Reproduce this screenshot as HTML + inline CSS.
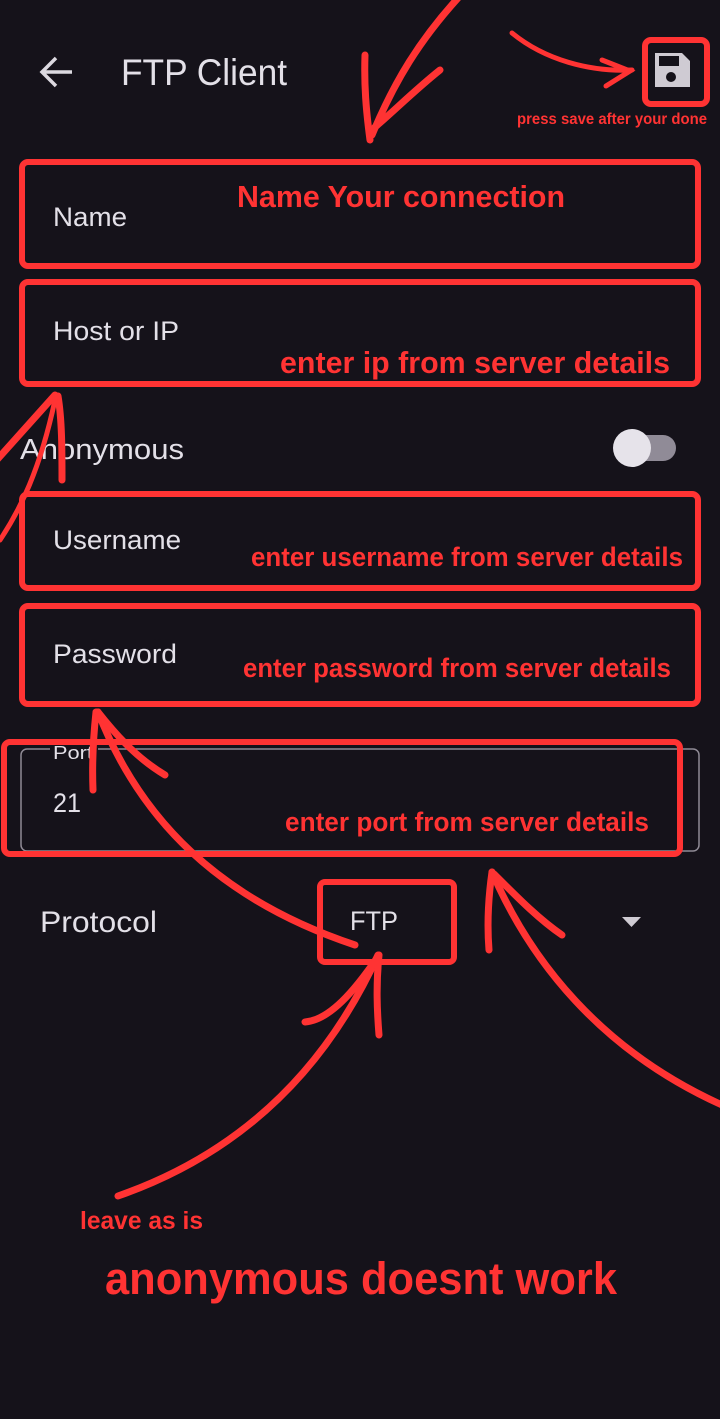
<!DOCTYPE html>
<html><head><meta charset="utf-8"><style>
html,body{margin:0;padding:0;background:#15121a;}
svg{display:block}
.ui{font-family:"Liberation Sans",sans-serif;fill:#e3e0e8}
.r{font-family:"Liberation Sans Narrow","Liberation Sans",sans-serif;font-weight:bold;fill:#ff3333}
</style></head><body>
<svg width="720" height="1419" viewBox="0 0 720 1419" xmlns="http://www.w3.org/2000/svg">
<rect width="720" height="1419" fill="#15121a"/>
<!-- app bar -->
<path d="M72 72H42M56 58L42 72L56 86" stroke="#dcd9e0" stroke-width="3.5" fill="none"/>
<text x="121" y="85" class="ui" font-size="37" textLength="166" lengthAdjust="spacingAndGlyphs">FTP Client</text>
<path d="M655 53h27l8 8v26h-35z" fill="#cfcbd3"/>
<rect x="659" y="56" width="20" height="10" fill="#15121a"/>
<circle cx="671" cy="77" r="5" fill="#15121a"/>
<rect x="645" y="40" width="62" height="64" rx="6" fill="none" stroke="#ff3333" stroke-width="6"/>
<text x="517" y="124" class="r" font-size="16" textLength="190" lengthAdjust="spacingAndGlyphs">press save after your done</text>
<!-- fields underlying gray lines -->
<g stroke="#8f8a95" stroke-width="1.5" fill="none">
<rect x="21" y="749" width="678" height="102" rx="6"/>
</g>
<rect x="50" y="745" width="48" height="10" fill="#15121a"/>
<text x="53" y="759" class="ui" font-size="18" textLength="40" lengthAdjust="spacingAndGlyphs">Port</text>
<text x="53" y="812" class="ui" font-size="27" textLength="28" lengthAdjust="spacingAndGlyphs">21</text>
<text x="53" y="226" class="ui" font-size="27" textLength="74" lengthAdjust="spacingAndGlyphs">Name</text>
<text x="53" y="340" class="ui" font-size="27" textLength="126" lengthAdjust="spacingAndGlyphs">Host or IP</text>
<text x="20" y="459" class="ui" font-size="29" textLength="164" lengthAdjust="spacingAndGlyphs">Anonymous</text>
<text x="53" y="549" class="ui" font-size="27" textLength="128" lengthAdjust="spacingAndGlyphs">Username</text>
<text x="53" y="663" class="ui" font-size="27" textLength="124" lengthAdjust="spacingAndGlyphs">Password</text>
<text x="40" y="932" class="ui" font-size="30" textLength="117" lengthAdjust="spacingAndGlyphs">Protocol</text>
<text x="350" y="930" class="ui" font-size="27" textLength="48" lengthAdjust="spacingAndGlyphs">FTP</text>
<path d="M622 917h19l-9.5 10z" fill="#cfcbd3"/>
<!-- toggle -->
<rect x="618" y="435" width="58" height="26" rx="13" fill="#908b97"/>
<circle cx="632" cy="448" r="19" fill="#e6e3ea"/>
<!-- red boxes -->
<g fill="none" stroke="#ff3333" stroke-width="6">
<rect x="22" y="162" width="676" height="104" rx="6"/>
<rect x="22" y="282" width="676" height="102" rx="6"/>
<rect x="22" y="494" width="676" height="94" rx="6"/>
<rect x="22" y="606" width="676" height="98" rx="6"/>
<rect x="4" y="742" width="676" height="112" rx="6"/>
<rect x="320" y="882" width="134" height="80" rx="5"/>
</g>
<!-- red text -->
<text x="237" y="207" class="r" font-size="31" textLength="328" lengthAdjust="spacingAndGlyphs">Name Your connection</text>
<text x="280" y="373" class="r" font-size="31" textLength="390" lengthAdjust="spacingAndGlyphs">enter ip from server details</text>
<text x="251" y="566" class="r" font-size="27" textLength="432" lengthAdjust="spacingAndGlyphs">enter username from server details</text>
<text x="243" y="677" class="r" font-size="27" textLength="428" lengthAdjust="spacingAndGlyphs">enter password from server details</text>
<text x="285" y="831" class="r" font-size="27" textLength="364" lengthAdjust="spacingAndGlyphs">enter port from server details</text>
<text x="80" y="1229" class="r" font-size="25" textLength="123" lengthAdjust="spacingAndGlyphs">leave as is</text>
<text x="105" y="1294" class="r" font-size="45" textLength="512" lengthAdjust="spacingAndGlyphs">anonymous doesnt work</text>
<!-- arrows -->
<g fill="none" stroke="#ff3333" stroke-width="7" stroke-linecap="round">
<path d="M458 -2C420 40 395 80 372 135"/>
<path d="M365 55C364 85 366 110 370 140"/>
<path d="M440 70C415 90 395 110 374 128"/>
<path d="M512 33C545 60 590 72 632 70" stroke-width="5"/>
<path d="M602 60L630 71L606 86" stroke-width="5"/>
<path d="M-5 462L55 395"/>
<path d="M58 396C62 420 62 450 62 480"/>
<path d="M0 540C20 510 40 470 55 400" stroke-width="5"/>
<path d="M355 945C220 900 140 820 98 712"/>
<path d="M96 712C93 740 92 765 93 790"/>
<path d="M98 712C120 740 140 760 165 775"/>
<path d="M118 1196C250 1150 330 1060 378 955"/>
<path d="M379 955C376 985 377 1010 379 1035"/>
<path d="M377 958C355 990 330 1020 305 1022"/>
<path d="M722 1105C600 1050 530 960 492 872"/>
<path d="M492 872C488 900 487 925 489 950"/>
<path d="M494 874C520 900 540 920 562 935"/>
</g>
</svg>
</body></html>
